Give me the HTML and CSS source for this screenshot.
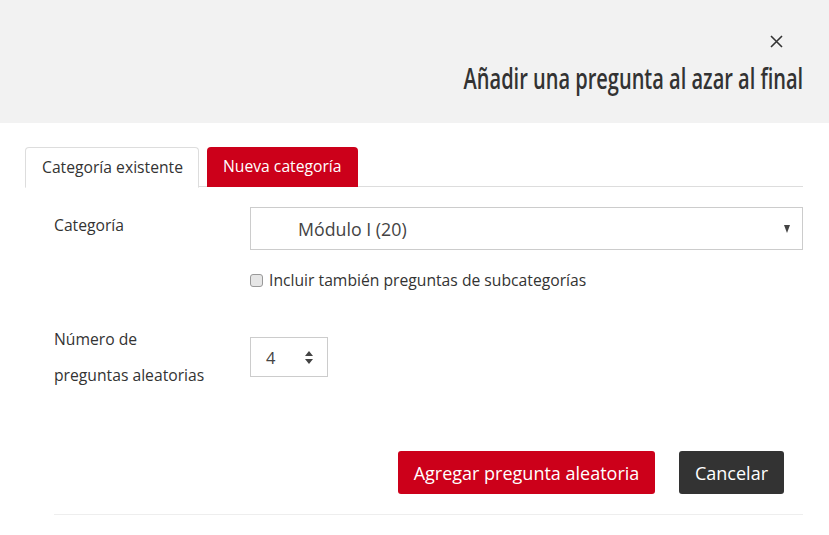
FILE: index.html
```html
<!DOCTYPE html>
<html lang="es">
<head>
<meta charset="utf-8">
<link rel="stylesheet" href="styles.css">
</head>
<body>
<div class="modal">
  <header class="modal-header">
    <button class="close" aria-label="Cerrar">
      <svg width="13" height="13" viewBox="0 0 13 13"><path d="M1 1 L12 12 M12 1 L1 12" stroke="#333" stroke-width="1.6" fill="none"/></svg>
    </button>
    <h1 class="title">Añadir una pregunta al azar al final</h1>
  </header>
  <div class="modal-body">
    <ul class="tabs">
      <li class="tab active">Categoría existente</li>
      <li class="tab red">Nueva categoría</li>
    </ul>
    <div class="form">
      <div class="row row-cat">
        <div class="label">Categoría</div>
        <div class="field">
          <div class="select">
            <span class="select-text">Módulo I (20)</span>
            <span class="caret"></span>
          </div>
          <label class="check"><span class="box"></span>Incluir también preguntas de subcategorías</label>
        </div>
      </div>
      <div class="row row-num">
        <div class="label two">Número de<br>preguntas aleatorias</div>
        <div class="field">
          <div class="number">
            <span>4</span>
            <svg class="spin" width="8" height="13" viewBox="0 0 8 13"><path d="M4 0 L8 5 L0 5 Z M0 8 L8 8 L4 13 Z" fill="#444"/></svg>
          </div>
        </div>
      </div>
      <div class="actions">
        <button class="btn btn-red">Agregar pregunta aleatoria</button>
        <button class="btn btn-dark">Cancelar</button>
      </div>
      <div class="bottom-line"></div>
    </div>
  </div>
</div>
</body>
</html>
```
FILE: styles.css
```css
* { box-sizing: border-box; }
html, body { margin: 0; padding: 0; background: #fff; }
body { font-family: "Open Sans", "Liberation Sans", sans-serif; color: #333; font-size: 15.7px; }
.modal-header {
  background: #f2f2f2;
  height: 123px;
  padding: 35px 26px 0 0;
  display: flex;
  flex-direction: column;
  align-items: flex-end;
}
.close {
  border: 0; background: none; padding: 0; margin: 0 20px 0 0;
  width: 13px; height: 13px; display: block; cursor: pointer;
}
.close svg { display: block; }
.title {
  margin: 12px 0 0 0;
  font-family: "Open Sans", sans-serif;
  font-weight: 600;
  font-size: 29px;
  line-height: 36px;
  color: #333;
  white-space: nowrap;
  transform: scaleX(0.69);
  transform-origin: right center;
}
.modal-body { padding: 24px 26px 0 25px; }
.tabs {
  list-style: none; margin: 0; padding: 0;
  display: flex; gap: 8px;
  border-bottom: 1px solid #ddd;
  height: 40px;
}
.tab {
  height: 41px;
  padding: 0 16px;
  line-height: 40px;
  border-radius: 4px 4px 0 0;
  white-space: nowrap;
}
.tab.active { border: 1px solid #ddd; border-bottom-color: #fff; background: #fff; width: 174px; padding: 0 0 0 16px; line-height: 38px; }
.tab.red { background: #cc001a; color: #fff; height: 40px; width: 151px; padding: 0 0 0 16px; line-height: 39px;}
.form { padding: 20px 0 0 29px; }
.row { display: flex; }
.label { width: 196px; flex: none; line-height: 36px; }
.field { flex: 1; }
.select {
  height: 43px;
  border: 1px solid #ccc;
  display: flex; align-items: center;
  padding: 0 12px 0 47px;
  color: #444;
  font-size: 17.8px;
}
.select-text { flex: 1; }
.caret {
  width: 0; height: 0;
  border-left: 3.5px solid transparent; border-right: 3.5px solid transparent;
  border-top: 8px solid #444;
}
.check { display: flex; align-items: center; margin-top: 20px; height: 20px; color: #333; white-space: nowrap; }
.box {
  width: 13px; height: 13px; border: 1px solid #999; border-radius: 3px;
  background: #e6e6e6; margin-right: 6px; flex: none;
}
.row-num { margin-top: 31px; }
.row-num .field { padding-top: 16px; }
.number {
  width: 78px; height: 40px; border: 1px solid #ccc;
  display: flex; align-items: center; justify-content: space-between;
  padding: 0 14px 0 15px; font-size: 16.5px; color: #444;
}
.spin { display: block; }
.actions { display: flex; justify-content: flex-end; gap: 24px; margin-top: 58px; padding-right: 19px; }
.btn {
  height: 43px; border: 0; border-radius: 3px; color: #fff;
  font-family: "Open Sans", sans-serif; font-size: 18px; padding: 0; white-space: nowrap;
}
.btn-red { background: #cc001a; width: 257px; }
.btn-dark { background: #333; width: 105px; }
.bottom-line { border-top: 1px solid #eee; margin-top: 20px; }
```
